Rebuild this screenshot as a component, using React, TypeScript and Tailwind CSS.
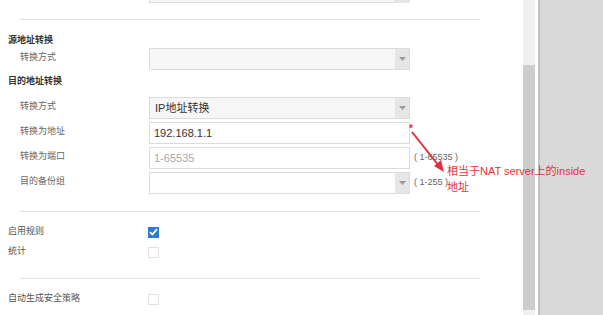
const font = "font-['Liberation_Sans','Noto_Sans_CJK_SC',sans-serif]";

const Arrow = () => (
    <span className="flex h-full w-[14px] items-center justify-center bg-[#e6e6e6]">
        <svg width="7" height="4" viewBox="0 0 7 4">
            <path d="M0 0 L7 0 L3.5 4 Z" fill="#9a9a9a" />
        </svg>
    </span>
);

const Select = ({ value, white }: { value?: string; white?: boolean }) => (
    <div className={`flex h-[22px] w-[261px] border border-[#dcdcdc] ${white ? "bg-white" : "bg-[#f6f6f6]"}`}>
        <span className="flex-1 pl-[5px] text-[11px] leading-[20px] text-[#333]">{value}</span>
        <Arrow />
    </div>
);

const Input = ({ value, placeholder }: { value?: string; placeholder?: string }) => (
    <div className="h-[22px] w-[261px] border border-[#dcdcdc] bg-white pl-[4px] text-[11px] leading-[20px]">
        {value ? <span className="text-[#333]">{value}</span> : <span className="text-[#aaa]">{placeholder}</span>}
    </div>
);

const Row = ({ label, children, hint }: { label: string; children: React.ReactNode; hint?: string }) => (
    <div className="flex h-[22px] items-center">
        <span className="w-[149px] shrink-0 pl-[20px] pb-[3px] text-[9px] text-[#666]">{label}</span>
        {children}
        {hint && <span className="ml-[4px] whitespace-nowrap text-[9px] text-[#666]">{hint}</span>}
    </div>
);

const Check = ({ checked }: { checked?: boolean }) =>
    checked ? (
        <span className="flex h-[11px] w-[11px] items-center justify-center bg-[#2d7ad6]">
            <svg width="9" height="8" viewBox="0 0 9 8">
                <path d="M1 4.2 L3.4 6.5 L8 1.2" stroke="#fff" strokeWidth="1.8" fill="none" />
            </svg>
        </span>
    ) : (
        <span className="h-[11px] w-[11px] border border-[#e2e2e2] bg-white" />
    );

const CheckRow = ({ label, checked }: { label: string; checked?: boolean }) => (
    <div className="flex h-[14px] items-center">
        <span className="w-[148px] shrink-0 pl-[8px] text-[9px] text-[#555]">{label}</span>
        <Check checked={checked} />
    </div>
);

const Line = () => <div className="ml-[20px] h-px w-[460px] bg-[#e2e2e2]" />;

export default function App() {
    return (
        <div className={`flex h-[315px] w-[603px] overflow-hidden bg-white ${font}`}>
            <div className="relative w-[521px]">
                <div className="ml-[149px] flex h-[3px] w-[261px]">
                    <div className="flex-1 border-x border-b border-[#dcdcdc] bg-[#f6f6f6]" />
                    <div className="w-[14px] bg-[#e6e6e6]" />
                </div>
                <div className="mt-[16px]">
                    <Line />
                </div>

                <h3 className="mt-[13px] h-[14px] pl-[8px] text-[9px] font-bold leading-[14px] text-[#333]">源地址转换</h3>
                <div className="mt-[1px]">
                    <Row label="转换方式">
                        <Select />
                    </Row>
                </div>

                <h3 className="mt-[4px] h-[14px] pl-[8px] text-[9px] font-bold leading-[14px] text-[#333]">目的地址转换</h3>
                <div className="mt-[9px] flex flex-col gap-[3px]">
                    <Row label="转换方式">
                        <Select value="IP地址转换" />
                    </Row>
                    <Row label="转换为地址">
                        <Input value="192.168.1.1" />
                    </Row>
                    <Row label="转换为端口" hint="( 1-65535 )">
                        <Input placeholder="1-65535" />
                    </Row>
                    <Row label="目的备份组" hint="( 1-255 )">
                        <Select white />
                    </Row>
                </div>

                <div className="mt-[17px]">
                    <Line />
                </div>
                <div className="mt-[13px]">
                    <CheckRow label="启用规则" checked />
                </div>
                <div className="mt-[6px]">
                    <CheckRow label="统计" />
                </div>
                <div className="mt-[19px]">
                    <Line />
                </div>
                <div className="mt-[13px]">
                    <CheckRow label="自动生成安全策略" />
                </div>

                {/* annotation */}
                <span className="absolute left-[409px] top-[121px] text-[10px] font-bold text-[#e0303a]">*</span>
                <svg className="absolute left-[405px] top-[125px]" width="45" height="55" viewBox="0 0 45 55">
                    <line x1="7" y1="7" x2="34" y2="41" stroke="#e0303a" strokeWidth="2" />
                    <path d="M39 47 L29 41 L36 35 Z" fill="#e0303a" />
                </svg>
                <div className="absolute left-[447px] top-[163px] whitespace-nowrap text-[11px] leading-[16px] text-[#e5323b]">
                    相当于NAT server上的inside
                    <br />
                    地址
                </div>
            </div>

            <div className="flex w-[17px] bg-white">
                <div className="ml-[2px] flex w-[12px] flex-col bg-[#f0f0f0]">
                    <div className="mt-[65px] h-[245px] bg-[#cdcdcd]" />
                </div>
            </div>
            <div className="flex-1 border-l-2 border-[#c4c4c4] bg-[#d9d9d9]" />
        </div>
    );
}
